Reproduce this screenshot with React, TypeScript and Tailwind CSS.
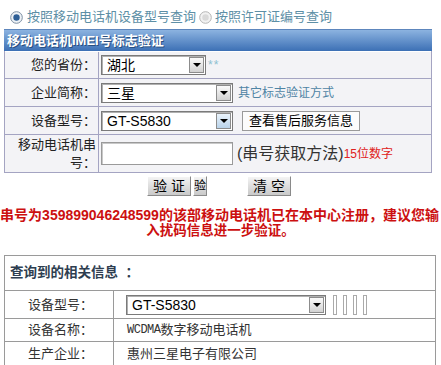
import React from "react";

const FONT = "font-['Liberation_Sans','Noto_Sans_CJK_SC',sans-serif]";

function Radio({ checked }: { checked: boolean }) {
  return (
    <svg width="13" height="13" viewBox="0 0 13 13" className="shrink-0">
      <circle cx="6.5" cy="6.5" r="5.8" fill={checked ? "#eef2f6" : "#f2f2f2"} stroke={checked ? "#7c8ea2" : "#b5b5b5"} strokeWidth="1" />
      {checked ? <circle cx="6.5" cy="6.5" r="3.2" fill="#2f5f96" /> : <circle cx="6.5" cy="6.5" r="3.2" fill="#d9d9d9" />}
    </svg>
  );
}

function Arrow({ blue }: { blue?: boolean }) {
  return (
    <div
      className={`w-[15px] self-stretch border border-[#8c8c8c] flex items-center justify-center ${
        blue ? "bg-gradient-to-b from-[#eaf3fb] to-[#b9d3ea]" : "bg-gradient-to-b from-[#fafafa] to-[#d2d2d2]"
      }`}
    >
      <div className="w-0 h-0 border-l-[4px] border-r-[4px] border-t-[4px] border-l-transparent border-r-transparent border-t-black" />
    </div>
  );
}

function Select({ value, width, blue }: { value: string; width: string; blue?: boolean }) {
  return (
    <div className={`${width} h-[20px] bg-white border border-[#7a7a7a] shadow-[inset_1px_1px_0_#b0b0b0] flex items-stretch p-[1px]`}>
      <span className="flex-1 text-[14px] leading-[17px] pl-[4px] text-black">{value}</span>
      <Arrow blue={blue} />
    </div>
  );
}

function Btn({ children, className = "" }: { children: React.ReactNode; className?: string }) {
  return (
    <div
      className={`h-[20px] border border-t-white border-l-white border-b-[#8a8a8a] border-r-[#8a8a8a] bg-gradient-to-b from-[#f4f4f4] to-[#c9c9c9] text-[14px] leading-[18px] text-black flex items-center justify-center ${className}`}
    >
      {children}
    </div>
  );
}

export default function App() {
  return (
    <div className={`w-[441px] h-[365px] overflow-hidden bg-white ${FONT}`}>
      {/* query type */}
      <div className="flex items-center h-[18px] mt-[8px] pl-[10px] text-[13px] text-[#5d8fa6]">
        <Radio checked />
        <span className="ml-[4px]">按照移动电话机设备型号查询</span>
        <span className="ml-[3px]"><Radio checked={false} /></span>
        <span className="ml-[3px]">按照许可证编号查询</span>
      </div>

      {/* verify form */}
      <div className="ml-[4px] w-[428px] mt-[3px]">
        <div className="h-[22px] border-t border-[#5d86bd] bg-gradient-to-b from-[#8cb3e0] to-[#3c70b5] text-white font-bold text-[13px] leading-[21px] pl-[3px] [text-shadow:1px_1px_0_#2a4f80]">
          移动电话机IMEI号标志验证
        </div>
        <div className="border-l border-r border-b border-[#a4a4c2] bg-[#f3f3f6] text-[13px] text-[#222]">
          <div className="flex h-[28px] border-t border-white border-b border-b-[#a4a4c2]">
            <div className="w-[94px] border-r border-[#a4a4c2] flex items-center justify-end pr-[2px]">您的省份：</div>
            <div className="flex-1 flex items-center pl-[2px]">
              <Select value="湖北" width="w-[105px]" />
              <span className="ml-[2px] text-[12px] text-[#8ec0d0] tracking-[1px]">**</span>
            </div>
          </div>
          <div className="flex h-[28px] border-b border-[#a4a4c2]">
            <div className="w-[94px] border-r border-[#a4a4c2] flex items-center justify-end pr-[2px]">企业简称：</div>
            <div className="flex-1 flex items-center pl-[2px]">
              <Select value="三星" width="w-[132px]" />
              <span className="ml-[5px] text-[12px] text-[#4f84a4]">其它标志验证方式</span>
            </div>
          </div>
          <div className="flex h-[28px] border-b border-[#a4a4c2]">
            <div className="w-[94px] border-r border-[#a4a4c2] flex items-center justify-end pr-[2px]">设备型号：</div>
            <div className="flex-1 flex items-center pl-[2px]">
              <Select value="GT-S5830" width="w-[132px]" blue />
              <div className="ml-[9px] h-[20px] px-[6px] bg-[#fcfcfc] border border-[#9a9a9a] text-[13px] leading-[18px] text-black">
                查看售后服务信息
              </div>
            </div>
          </div>
          <div className="flex h-[37px]">
            <div className="w-[94px] border-r border-[#a4a4c2] flex items-center justify-end pr-[2px] text-right leading-[18px]">
              移动电话机串
              <br />
              号：
            </div>
            <div className="flex-1 flex items-center pl-[2px]">
              <div className="w-[132px] h-[23px] bg-white border border-[#9a9a9a] shadow-[inset_1px_1px_0_#c8c8c8]" />
              <span className="ml-[4px] text-[16px] text-[#333]">(串号获取方法)</span>
              <span className="text-[12px] text-[#e02020]">15位数字</span>
            </div>
          </div>
        </div>
        <div className="flex mt-[3px] pl-[143px]">
          <Btn className="w-[44px]">验 证</Btn>
          <Btn className="w-[14px] ml-[2px] justify-start">
            <span className="text-[12px] leading-[18px]">验</span>
          </Btn>
          <Btn className="w-[44px] ml-[40px]">清 空</Btn>
        </div>
      </div>

      {/* result message */}
      <div className="mt-[11px] text-center font-bold text-[#cc1010] text-[14px] leading-[16px] whitespace-nowrap">
        <div className="-ml-[2px]">串号为359899046248599的该部移动电话机已在本中心注册，建议您输</div>
        <div className="text-[13.5px]">入扰码信息进一步验证。</div>
      </div>

      {/* related info */}
      <div className="ml-[4px] w-[432px] mt-[16px] border border-[#9a9a9a] text-[13px] text-[#333]">
        <div className="h-[35px] border-b border-[#9a9a9a] flex items-center pl-[5px] font-bold text-[13.5px] text-[#2e3e50]">
          查询到的相关信息 &nbsp;：
        </div>
        <div className="flex h-[28px] border-b border-[#9a9a9a]">
          <div className="w-[109px] border-r border-[#9a9a9a] flex items-center pl-[23px]">设备型号：</div>
          <div className="flex-1 flex items-center pl-[12px]">
            <Select value="GT-S5830" width="w-[200px]" />
            <div className="flex gap-[6px] ml-[7px]">
              <div className="w-[4px] h-[20px] border border-[#aaaaaa]" />
              <div className="w-[4px] h-[20px] border border-[#aaaaaa]" />
              <div className="w-[4px] h-[20px] border border-[#aaaaaa]" />
              <div className="w-[4px] h-[20px] border border-[#aaaaaa]" />
            </div>
          </div>
        </div>
        <div className="flex h-[23px] border-b border-[#9a9a9a]">
          <div className="w-[109px] border-r border-[#9a9a9a] flex items-center pl-[23px]">设备名称：</div>
          <div className="flex-1 flex items-center pl-[13px]">
            <span className="font-['Liberation_Mono','Noto_Sans_CJK_SC',monospace] text-[12px] tracking-[-0.5px]">WCDMA</span>
            数字移动电话机
          </div>
        </div>
        <div className="flex h-[23px]">
          <div className="w-[109px] border-r border-[#9a9a9a] flex items-center pl-[23px]">生产企业：</div>
          <div className="flex-1 flex items-center pl-[13px]">惠州三星电子有限公司</div>
        </div>
      </div>
    </div>
  );
}
